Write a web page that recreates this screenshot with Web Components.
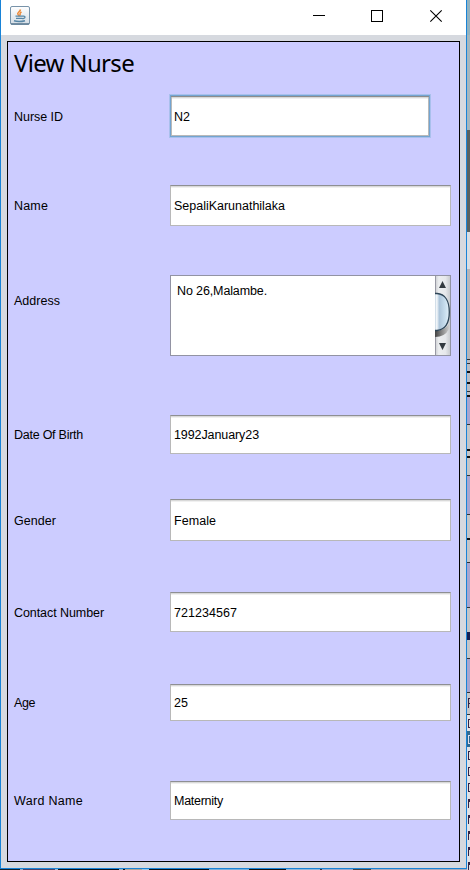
<!DOCTYPE html>
<html lang="en"><head><meta charset="utf-8"><title>View Nurse</title>
<style>
html,body{margin:0;width:470px;height:870px;overflow:hidden}
body{font:12.5px/14px "Liberation Sans",sans-serif;color:#000;display:grid;grid-template:869px 1px/467px 3px;background:#111827}
</style></head><body>
<app-window>
<window-titlebar slot="bar"></window-titlebar>
<form-panel>
<fit-text class="t" w="120" style="--fs:24px;--ff:'Noto Sans','DejaVu Sans',sans-serif;height:28px;line-height:28px;padding:7px 0 0 5px;margin-bottom:17px">View Nurse</fit-text>
<nurse-row label="Nurse ID" lw="49" vw="16" focused style="--h:44px;--w:262px;--gap:47px;--dy:1px">N2</nurse-row>
<nurse-row label="Name" lw="34" vw="111" style="--h:41px;--gap:49px">SepaliKarunathilaka</nurse-row>
<nurse-row label="Address" lw="46" vw="90" area style="--h:81px;--gap:59px">No 26,Malambe.</nurse-row>
<nurse-row label="Date Of Birth" lw="69" vw="85" style="--h:39px;--gap:45px">1992January23</nurse-row>
<nurse-row label="Gender" lw="42" vw="42" style="--h:42px;--gap:51px;--dy:1px">Female</nurse-row>
<nurse-row label="Contact Number" lw="90" vw="63" style="--h:40px;--gap:52px;--dy:1px">721234567</nurse-row>
<nurse-row label="Age" lw="21" vw="14" style="--h:37px;--gap:60px">25</nurse-row>
<nurse-row label="Ward Name" lw="69" vw="49" style="--h:39px;--gap:0px">Maternity</nurse-row>
</form-panel>
</app-window>
<side-strip></side-strip>
<bottom-strip></bottom-strip>
<script>
class Base extends HTMLElement{
  constructor(){super();this.attachShadow({mode:'open'});}
  connectedCallback(){this.shadowRoot.innerHTML=this.render();this.ready&&this.ready();}
}
customElements.define('app-window',class extends Base{render(){return `<style>
:host{display:flex;flex-direction:column;box-sizing:border-box;width:467px;height:869px;border:1px solid #1883d7;border-top:0;background:#d6d9df}
main{padding:6px 6px 6px 6px;flex:1;display:flex}</style><slot name="bar"></slot><main><slot></slot></main>`}});
customElements.define('window-titlebar',class extends Base{render(){return `<style>
:host{display:block;height:35px;background:#fff}svg{display:block}</style>
<svg width="465" height="35" viewBox="1 0 465 35">
<defs><linearGradient id="g" x2="0" y2="1"><stop stop-color="#fff"/><stop offset="1" stop-color="#d3dce5"/></linearGradient></defs>
<rect x="10.5" y="6.5" width="19" height="18" rx="1.5" fill="url(#g)" stroke="#7893a9"/>
<path d="M11 23.8H29" stroke="#5a7890" stroke-width="1.2"/>
<path d="M20.5 9.5C20 12 16.500 12.500 18 14.500Q18.500 15.500 19.500 16M21.500 12Q19 13.500 20.500 15.500" fill="none" stroke="#ee8a38" stroke-width="1.5"/>
<path d="M15.500 16.200H23M16 18.300H22.500M23 16.200Q26 16 24.500 18L22.500 18.800" fill="none" stroke="#5786a6" stroke-width="1.3"/>
<path d="M14 20.800Q19 22.300 25 20.700" fill="none" stroke="#5786a6" stroke-width="1.500"/>
<g shape-rendering="crispEdges" fill="none" stroke="#000"><path d="M313 15.500H325"/><rect x="371.500" y="10.500" width="11" height="11"/></g>
<path d="M430.300 10.300L441.700 21.700M441.700 10.300L430.300 21.700" stroke="#000" stroke-width="1.100"/></svg>`}});
customElements.define('form-panel',class extends Base{render(){return `<style>
:host{display:flex;flex-direction:column;box-sizing:border-box;width:453px;height:821px;border:1px solid #000;background:#ccf;padding-left:1px}</style><slot></slot>`}});
customElements.define('fit-text',class extends Base{render(){return `<style>
:host{display:block;white-space:nowrap;font-family:var(--ff,inherit);font-size:var(--fs,12.5px)}span{display:inline-block}</style><span><slot></slot></span>`}
ready(){const s=this.shadowRoot.querySelector('span'),w=+this.getAttribute('w'),n=this.textContent.length;
s.style.letterSpacing=((w-s.getBoundingClientRect().width)/n)+'px';}});
customElements.define('scroll-bar',class extends Base{render(){return `<style>
:host{display:block;width:15px;height:79px}svg{display:block}</style>
<svg width="15" height="79"><defs><linearGradient id="t"><stop stop-color="#c8cacd"/><stop offset=".25" stop-color="#eceef0"/><stop offset=".7" stop-color="#e6e8eb"/><stop offset="1" stop-color="#c9ccd0"/></linearGradient>
<linearGradient id="b"><stop stop-color="#c3d3e1"/><stop offset=".12" stop-color="#f7fafc"/><stop offset=".3" stop-color="#adc5da"/><stop offset=".7" stop-color="#c8deee"/><stop offset="1" stop-color="#e3f1fa"/></linearGradient>
<linearGradient id="s"><stop stop-color="#444"/><stop offset="1" stop-color="#ccc"/></linearGradient></defs>
<rect width="15" height="79" fill="url(#t)"/><path d="M.5 0V79" stroke="#9899a4"/>
<path d="M0 55Q9 55 14 48V53Q10 61 0 61Z" fill="url(#s)"/>
<path d="M0 17.500H3C10 18 14.300 25 14.300 36S10 53.500 3 54.500H0Z" fill="url(#b)"/><path d="M0 17.500H2C10 18 14.300 25 14.300 36S10 53.500 2 54.500H0" fill="none" stroke="#2d4456" stroke-width="1.300"/>
<path d="M4 12L7.500 5L11 12ZM4 67H11L7.500 74Z" fill="#333a40"/></svg>`}});
customElements.define('nurse-row',class extends Base{render(){
const a=this.hasAttribute('area'),f=this.hasAttribute('focused');
return `<style>
:host{display:grid;grid-template-columns:${f?155:156}px var(--w,281px);height:var(--h);margin-bottom:var(--gap);align-items:center;padding-left:5px}
.l,.v{transform:translateY(var(--dy,0px))}
.l{position:relative;top:${a?-15:0}px}
.f{box-sizing:border-box;height:var(--h);width:100%;background:#fff;display:flex;align-items:center;padding-left:3px;border:1px solid #b8b8b8;border-top-color:#8e8f93;box-shadow:inset 0 1px #d9d9d9,inset 0 2px #f0f0f0}
.focused{border:1px solid #a9c0ec;box-shadow:inset 0 0 0 1px #73a4d1,inset 0 2px #8c8c8c,inset -2px -2px #b9b9b9,inset 2px 0 #b9b9b9,inset 0 3px #d9d9d9,inset 0 4px #f0f0f0;padding-left:4px}
.area{border-color:#9293a3;box-shadow:none;align-items:flex-start;justify-content:space-between;padding-left:6px}
.area .v{margin-top:8px}
</style><fit-text class="l" w="${this.getAttribute('lw')}">${this.getAttribute('label')}</fit-text>
<div class="f ${f?'focused':''} ${a?'area':''}"><fit-text class="v" w="${this.getAttribute('vw')}">${this.textContent}</fit-text>${a?'<scroll-bar></scroll-bar>':''}</div>`}});
customElements.define('side-strip',class extends Base{render(){
const r=(y,h,c)=>`<rect y="${y}" width="3" height="${h}" fill="${c}"/>`;
let s=r(0,130,'#93b2bf')+r(35,95,'#a4b6be')+r(130,102,'#59605f')+r(232,37,'#d8dde3')+r(269,91,'#b5b5b9')+r(360,70,'#b9bdc6')+r(396,28,'#a7a5d0')+r(424,51,'#c3c5c9')+r(475,39,'#a7a5d0')+r(514,48,'#c3c5c9')+r(562,45,'#a7a5d0')+r(607,51,'#c3c5c9')+r(658,34,'#a7a5d0')+r(692,23,'#c5c6cb')+r(715,155,'#e0e1e6')+r(731,16,'#316a91');
for(const y of[359,363,371,382,391,395,424,475,514,562,607,658,692,714])s+=r(y,1,'#333');
for(const y of[371,382,395,449,456,538])s+=r(y,2,'#111');
s+=r(632,8,'#172052');
s+='<path d="M1.500 698V708M1.500 698.500H3M1.500 703.500H3" stroke="#324" fill="none"/>';
for(const y of[719,735,751,767,783])s+=`<path d="M1.500 ${y}V${y+9}M1.500 ${y+.5}H3M1.500 ${y+8.5}H3" stroke="${y==735?'#dde':'#324'}" fill="none"/>`;
for(const y of[799,815,831,847,862])s+=`<path d="M1.500 ${y}V${y+9}M2.500 ${y}V${y+3}" stroke="#324" fill="none"/>`;
return `<style>:host{display:block;grid-row:1/3;grid-column:2;height:870px}svg{display:block}</style><svg width="3" height="870" shape-rendering="crispEdges">${s}</svg>`}});
customElements.define('bottom-strip',class extends Base{render(){return `<style>:host{display:block;grid-row:2;grid-column:1;height:1px;background:linear-gradient(90deg,#102331 20px,#8cadcc 20px 23px,#49406a 23px 55px,#9bbdd3 55px 58px,#07111c 58px 119px,#91b4cc 119px 123px,#111 123px 125px,#aaa59b 125px 142px,#9ac8e7 142px 149px,#07111c 149px 209px,#79afda 209px 249px,#111 249px 286px,#91b7d9 286px 320px,#334 320px 322px,#98a9cd 322px 353px,#444 353px 371px,#aab 371px)}</style>`}});
</script></body></html>
